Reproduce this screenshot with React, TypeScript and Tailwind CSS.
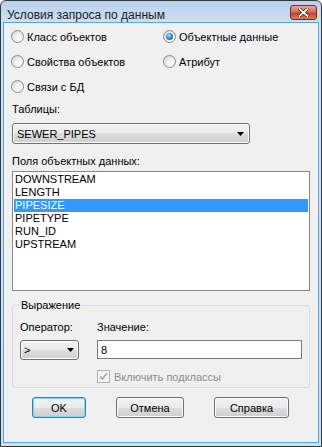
import React from "react";

const fields = ["DOWNSTREAM", "LENGTH", "PIPESIZE", "PIPETYPE", "RUN_ID", "UPSTREAM"];

function Radio({ label, checked }: { label: string; checked?: boolean }) {
  return (
    <div className="flex items-center gap-[3px] h-[25px]">
      <span className="w-[13px] h-[13px] shrink-0 rounded-full border border-[#8a8c8e] bg-[radial-gradient(circle_at_70%_75%,#ffffff_0%,#f4f4f4_35%,#cfd0d2_100%)] flex items-center justify-center">
        {checked && (
          <span className="w-[7px] h-[7px] rounded-full bg-[radial-gradient(circle_at_40%_35%,#b9e3ff_0%,#2f90d8_45%,#0a4c86_100%)]" />
        )}
      </span>
      <span>{label}</span>
    </div>
  );
}

function Arrow() {
  return (
    <svg width="7" height="4" viewBox="0 0 7 4" className="shrink-0">
      <path d="M0 0h7L3.5 4z" fill="#000" />
    </svg>
  );
}

function Combo({ value, className }: { value: string; className: string }) {
  return (
    <div
      className={
        "flex items-center justify-between rounded-[3px] border border-[#707070] bg-[linear-gradient(#f2f2f2_0%,#ebebeb_50%,#dddddd_50%,#cfcfcf_100%)] shadow-[inset_0_0_0_1px_#fcfcfc] " +
        className
      }
    >
      <span>{value}</span>
      <Arrow />
    </div>
  );
}

function Button({ label, w, def }: { label: string; w: string; def?: boolean }) {
  return (
    <button
      className={
        "h-[21px] rounded-[3px] border flex items-center justify-center bg-[linear-gradient(#f2f2f2_0%,#ebebeb_50%,#dddddd_50%,#cfcfcf_100%)] " +
        w +
        (def
          ? " border-[#3c7fb1] shadow-[inset_0_0_0_1px_#7fd3f8]"
          : " border-[#707070] shadow-[inset_0_0_0_1px_#fbfbfb]")
      }
    >
      {label}
    </button>
  );
}

export default function App() {
  return (
    <div className="w-[322px] h-[447px] flex flex-col border border-[#34393f] rounded-t-[6px] bg-[linear-gradient(#b9d1ed_0px,#cde0f4_22px,#cde0f3_100%)] font-['Liberation_Sans',Arial,sans-serif] text-[11px] leading-[14px] text-black overflow-hidden">
      {/* title bar */}
      <div className="h-[21px] flex items-start justify-between pl-[6px] pr-[4px]">
        <span className="mt-[7px] text-[12px] leading-[14px] text-[#1b1b1b]">Условия запроса по данным</span>
        <div className="mt-[4px] w-[27px] h-[15px] rounded-[3px] border border-[#7b2a20] bg-[linear-gradient(#e8a493_0%,#d3705c_45%,#c2432c_55%,#d77d62_100%)] flex items-center justify-center">
          <svg width="11" height="9" viewBox="0 0 11 9">
            <path d="M1.5 1l8 7M9.5 1l-8 7" stroke="#4a1a12" strokeWidth="3.2" strokeLinecap="square" />
            <path d="M1.5 1l8 7M9.5 1l-8 7" stroke="#fff" strokeWidth="1.8" strokeLinecap="square" />
          </svg>
        </div>
      </div>

      {/* client area */}
      <div className="flex-1 mx-[2px] mb-[3px] border border-[#5aa7dc] bg-[#f0f0f0] flex flex-col">
        <div className="grid grid-cols-[152px_1fr] pl-[7px] pt-[1px]">
          <Radio label="Класс объектов" />
          <Radio label="Объектные данные" checked />
          <Radio label="Свойства объектов" />
          <Radio label="Атрибут" />
          <Radio label="Связи с БД" />
        </div>

        <div className="px-[8px] flex flex-col">
          <span className="mt-[3px]">Таблицы:</span>
          <Combo value="SEWER_PIPES" className="mt-[7px] w-[238px] h-[21px] pl-[4px] pr-[5px]" />

          <span className="mt-[10px]">Поля объектных данных:</span>
          <div className="mt-[3px] h-[120px] border border-[#828790] bg-white pt-[1px] px-[1px] leading-[13px]">
            {fields.map((f) => (
              <div
                key={f}
                className={
                  "h-[13px] pl-[1px] " + (f === "PIPESIZE" ? "bg-[#3399ff] text-white" : "")
                }
              >
                {f}
              </div>
            ))}
          </div>

          <fieldset className="mt-[7px] border border-[#d5dfe5] rounded-[3px] pl-[7px] pr-[7px] pb-[4px]">
            <legend className="px-[1px]">Выражение</legend>
            <div className="grid grid-cols-[77px_1fr]">
              <span className="mt-[8px]">Оператор:</span>
              <span className="mt-[8px]">Значение:</span>
              <Combo value=">" className="mt-[6px] w-[59px] h-[20px] pl-[3px] pr-[4px]" />
              <div className="mt-[6px] h-[19px] border border-[#7a7a7a] bg-white pl-[3px] flex items-center">8</div>
              <div />
              <div className="mt-[10px] flex items-center gap-[4px] h-[13px] text-[#8d8d8d]">
                <span className="w-[13px] h-[13px] border border-[#b4b4b4] bg-[#f4f4f4] flex items-center justify-center">
                  <svg width="9" height="9" viewBox="0 0 9 9">
                    <path d="M1 4.5l2.3 2.5L8 1.2" stroke="#a9a9a9" strokeWidth="1.6" fill="none" />
                  </svg>
                </span>
                <span>Включить подклассы</span>
              </div>
            </div>
          </fieldset>
        </div>

        <div className="mt-[9px] pl-[28px] flex gap-[30px]">
          <Button label="OK" w="w-[54px]" def />
          <Button label="Отмена" w="w-[68px]" />
          <Button label="Справка" w="w-[75px]" />
        </div>
      </div>
    </div>
  );
}
